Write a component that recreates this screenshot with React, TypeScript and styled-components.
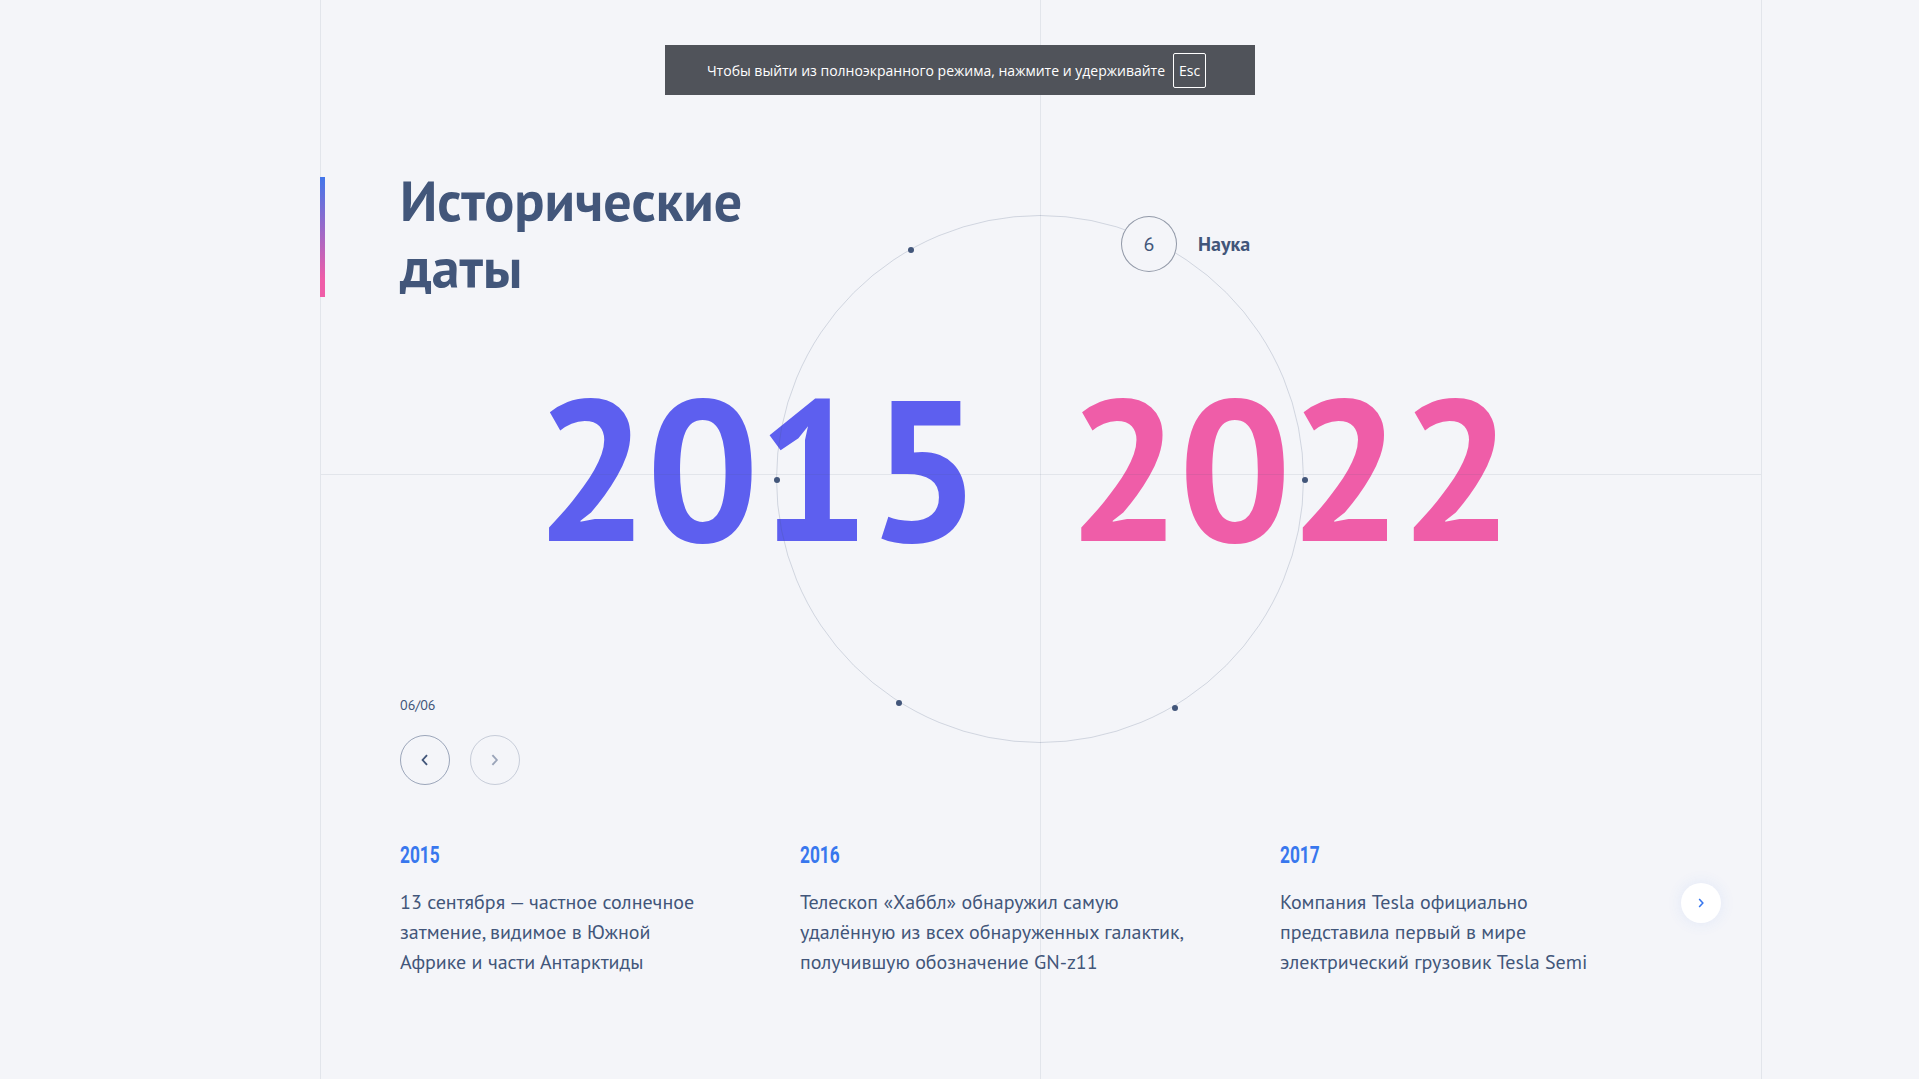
import React from "react";
import styled, { createGlobalStyle } from "styled-components";

const GlobalStyle = createGlobalStyle`
  html, body {
    margin: 0;
    padding: 0;
    background: #f4f5f9;
    font-family: "PT Sans", Roboto, "Noto Sans", sans-serif;
    color: #42567a;
    overflow: hidden;
  }
`;

const points = [
  { id: 1, angle: -119.5 },
  { id: 2, angle: -65.4, radius: 259.5, label: "Наука", active: true, num: 6 },
  { id: 3, angle: 0 },
  { id: 4, angle: 59.6 },
  { id: 5, angle: 122.5 },
  { id: 6, angle: 180 },
];

const events = [
  {
    year: "2015",
    text: "13 сентября — частное солнечное затмение, видимое в Южной Африке и части Антарктиды",
    width: 320,
  },
  {
    year: "2016",
    text: "Телескоп «Хаббл» обнаружил самую удалённую из всех обнаруженных галактик, получившую обозначение GN-z11",
    width: 400,
  },
  {
    year: "2017",
    text: "Компания Tesla официально представила первый в мире электрический грузовик Tesla Semi",
    width: 320,
  },
];

const Toast = styled.div`
  position: fixed;
  top: 45px;
  left: 50%;
  transform: translateX(-50%);
  width: 590px;
  height: 50px;
  background: #50535a;
  display: flex;
  align-items: center;
  justify-content: center;
  gap: 8px;
  color: #fff;
  font-family: "Open Sans", sans-serif;
  font-size: 14px;
  padding-right: 6px;
  box-sizing: border-box;
  z-index: 10;
`;

const EscKey = styled.span`
  display: inline-flex;
  align-items: center;
  justify-content: center;
  width: 31px;
  height: 33px;
  border: 1px solid #fff;
  border-radius: 2px;
  font-size: 14px;
`;

const Container = styled.main`
  position: relative;
  box-sizing: border-box;
  margin-left: 320px;
  width: 1442px;
  height: 1079px;
  padding-top: 167px;
  border-left: 1px solid rgba(66, 86, 122, 0.1);
  border-right: 1px solid rgba(66, 86, 122, 0.1);

  &::before {
    content: "";
    position: absolute;
    top: 0;
    bottom: 0;
    left: 719px;
    width: 1px;
    background: rgba(66, 86, 122, 0.1);
  }

  &::after {
    content: "";
    position: absolute;
    left: 0;
    right: 0;
    top: 474px;
    height: 1px;
    background: rgba(66, 86, 122, 0.1);
  }
`;

const Title = styled.h1`
  position: relative;
  margin: 0;
  padding-left: 79px;
  font-size: 56px;
  line-height: 1.2;
  font-weight: 700;
  color: #42567a;

  &::before {
    content: "";
    position: absolute;
    left: -1px;
    top: 10px;
    width: 5px;
    height: 120px;
    background: linear-gradient(180deg, #3877ee -5%, #ef5da8 85%);
  }
`;

const Circle = styled.div`
  position: absolute;
  top: 215px;
  left: 455px;
  width: 528px;
  height: 528px;
  box-sizing: border-box;
  border: 1px solid rgba(66, 86, 122, 0.2);
  border-radius: 50%;
  z-index: 2;
`;

const Point = styled.div<{ $active?: boolean }>`
  position: absolute;
  transform: translate(-50%, -50%);
  width: ${(p) => (p.$active ? "56px" : "6px")};
  height: ${(p) => (p.$active ? "56px" : "6px")};
  box-sizing: border-box;
  border-radius: 50%;
  background: ${(p) => (p.$active ? "#f4f5f9" : "#42567a")};
  border: ${(p) => (p.$active ? "1px solid rgba(48, 62, 88, 0.5)" : "none")};
  display: flex;
  align-items: center;
  justify-content: center;
  font-size: 20px;
  color: #42567a;
`;

const PointLabel = styled.span`
  position: absolute;
  left: 76px;
  top: 50%;
  transform: translateY(-50%);
  font-size: 20px;
  font-weight: 700;
  color: #42567a;
`;

const Years = styled.div`
  display: flex;
  justify-content: center;
  gap: 89px;
  margin-top: 66px;
  padding-right: 36px;
  font-size: 200px;
  line-height: 1;
  font-weight: 700;
  letter-spacing: -2.6px;
`;

const Year = styled.span<{ $color: string }>`
  color: ${(p) => p.$color};
`;

const Controls = styled.div`
  margin-top: 130px;
  padding-left: 79px;
`;

const Counter = styled.div`
  font-size: 14px;
  line-height: 17px;
  color: #42567a;
`;

const Buttons = styled.div`
  display: flex;
  gap: 20px;
  margin-top: 21px;
`;

const NavButton = styled.button<{ $disabled?: boolean }>`
  width: 50px;
  height: 50px;
  padding: 0;
  box-sizing: border-box;
  border-radius: 50%;
  border: 1px solid rgba(66, 86, 122, 0.5);
  background: transparent;
  display: flex;
  align-items: center;
  justify-content: center;
  color: #42567a;
  opacity: ${(p) => (p.$disabled ? 0.5 : 1)};
  cursor: pointer;
`;

const EventsRow = styled.div`
  display: flex;
  align-items: center;
  margin-top: 56px;
  padding-left: 79px;
  padding-right: 40px;
`;

const Slides = styled.div`
  flex: 1;
  display: flex;
  gap: 80px;
`;

const Slide = styled.div<{ $width: number }>`
  width: ${(p) => p.$width}px;
  flex-shrink: 0;
`;

const SlideYear = styled.div`
  display: inline-block;
  font-family: Roboto, sans-serif;
  font-size: 24px;
  line-height: 1.2;
  font-weight: 700;
  color: #3877ee;
  transform: scaleX(0.72);
  transform-origin: left center;
`;

const SlideText = styled.p`
  margin: 17px 0 0;
  font-size: 20px;
  line-height: 30px;
  color: #42567a;
`;

const NextButton = styled.button`
  width: 40px;
  height: 40px;
  padding: 0;
  border: none;
  border-radius: 50%;
  background: #fff;
  box-shadow: 0 0 15px rgba(56, 119, 238, 0.1);
  display: flex;
  align-items: center;
  justify-content: center;
  color: #3877ee;
  margin-top: -12px;
`;

const Chevron = ({ dir, size = 12 }: { dir: "left" | "right"; size?: number }) => (
  <svg width={size * 0.62} height={size} viewBox="0 0 8 13" fill="none">
    <path
      d={dir === "left" ? "M6.5 1.2L1.7 6.5l4.8 5.3" : "M1.5 1.2l4.8 5.3-4.8 5.3"}
      stroke="currentColor"
      strokeWidth="2"
    />
  </svg>
);

export default function App() {
  const c = 264;
  return (
    <>
      <GlobalStyle />
      <Toast>
        Чтобы выйти из полноэкранного режима, нажмите и удерживайте <EscKey>Esc</EscKey>
      </Toast>
      <Container>
        <Title>
          Исторические
          <br />
          даты
        </Title>
        <Circle>
          {points.map((p) => {
            const a = (p.angle * Math.PI) / 180;
            const r = p.radius ?? c;
            return (
              <Point
                key={p.id}
                $active={p.active}
                style={{ left: c + r * Math.cos(a), top: c + r * Math.sin(a) }}
              >
                {p.active && p.num}
                {p.label && <PointLabel>{p.label}</PointLabel>}
              </Point>
            );
          })}
        </Circle>
        <Years>
          <Year $color="#5d5fef">2015</Year>
          <Year $color="#ef5da8">2022</Year>
        </Years>
        <Controls>
          <Counter>06/06</Counter>
          <Buttons>
            <NavButton>
              <Chevron dir="left" />
            </NavButton>
            <NavButton $disabled>
              <Chevron dir="right" />
            </NavButton>
          </Buttons>
        </Controls>
        <EventsRow>
          <Slides>
            {events.map((e) => (
              <Slide key={e.year} $width={e.width}>
                <SlideYear>{e.year}</SlideYear>
                <SlideText>{e.text}</SlideText>
              </Slide>
            ))}
          </Slides>
          <NextButton>
            <Chevron dir="right" size={10} />
          </NextButton>
        </EventsRow>
      </Container>
    </>
  );
}
